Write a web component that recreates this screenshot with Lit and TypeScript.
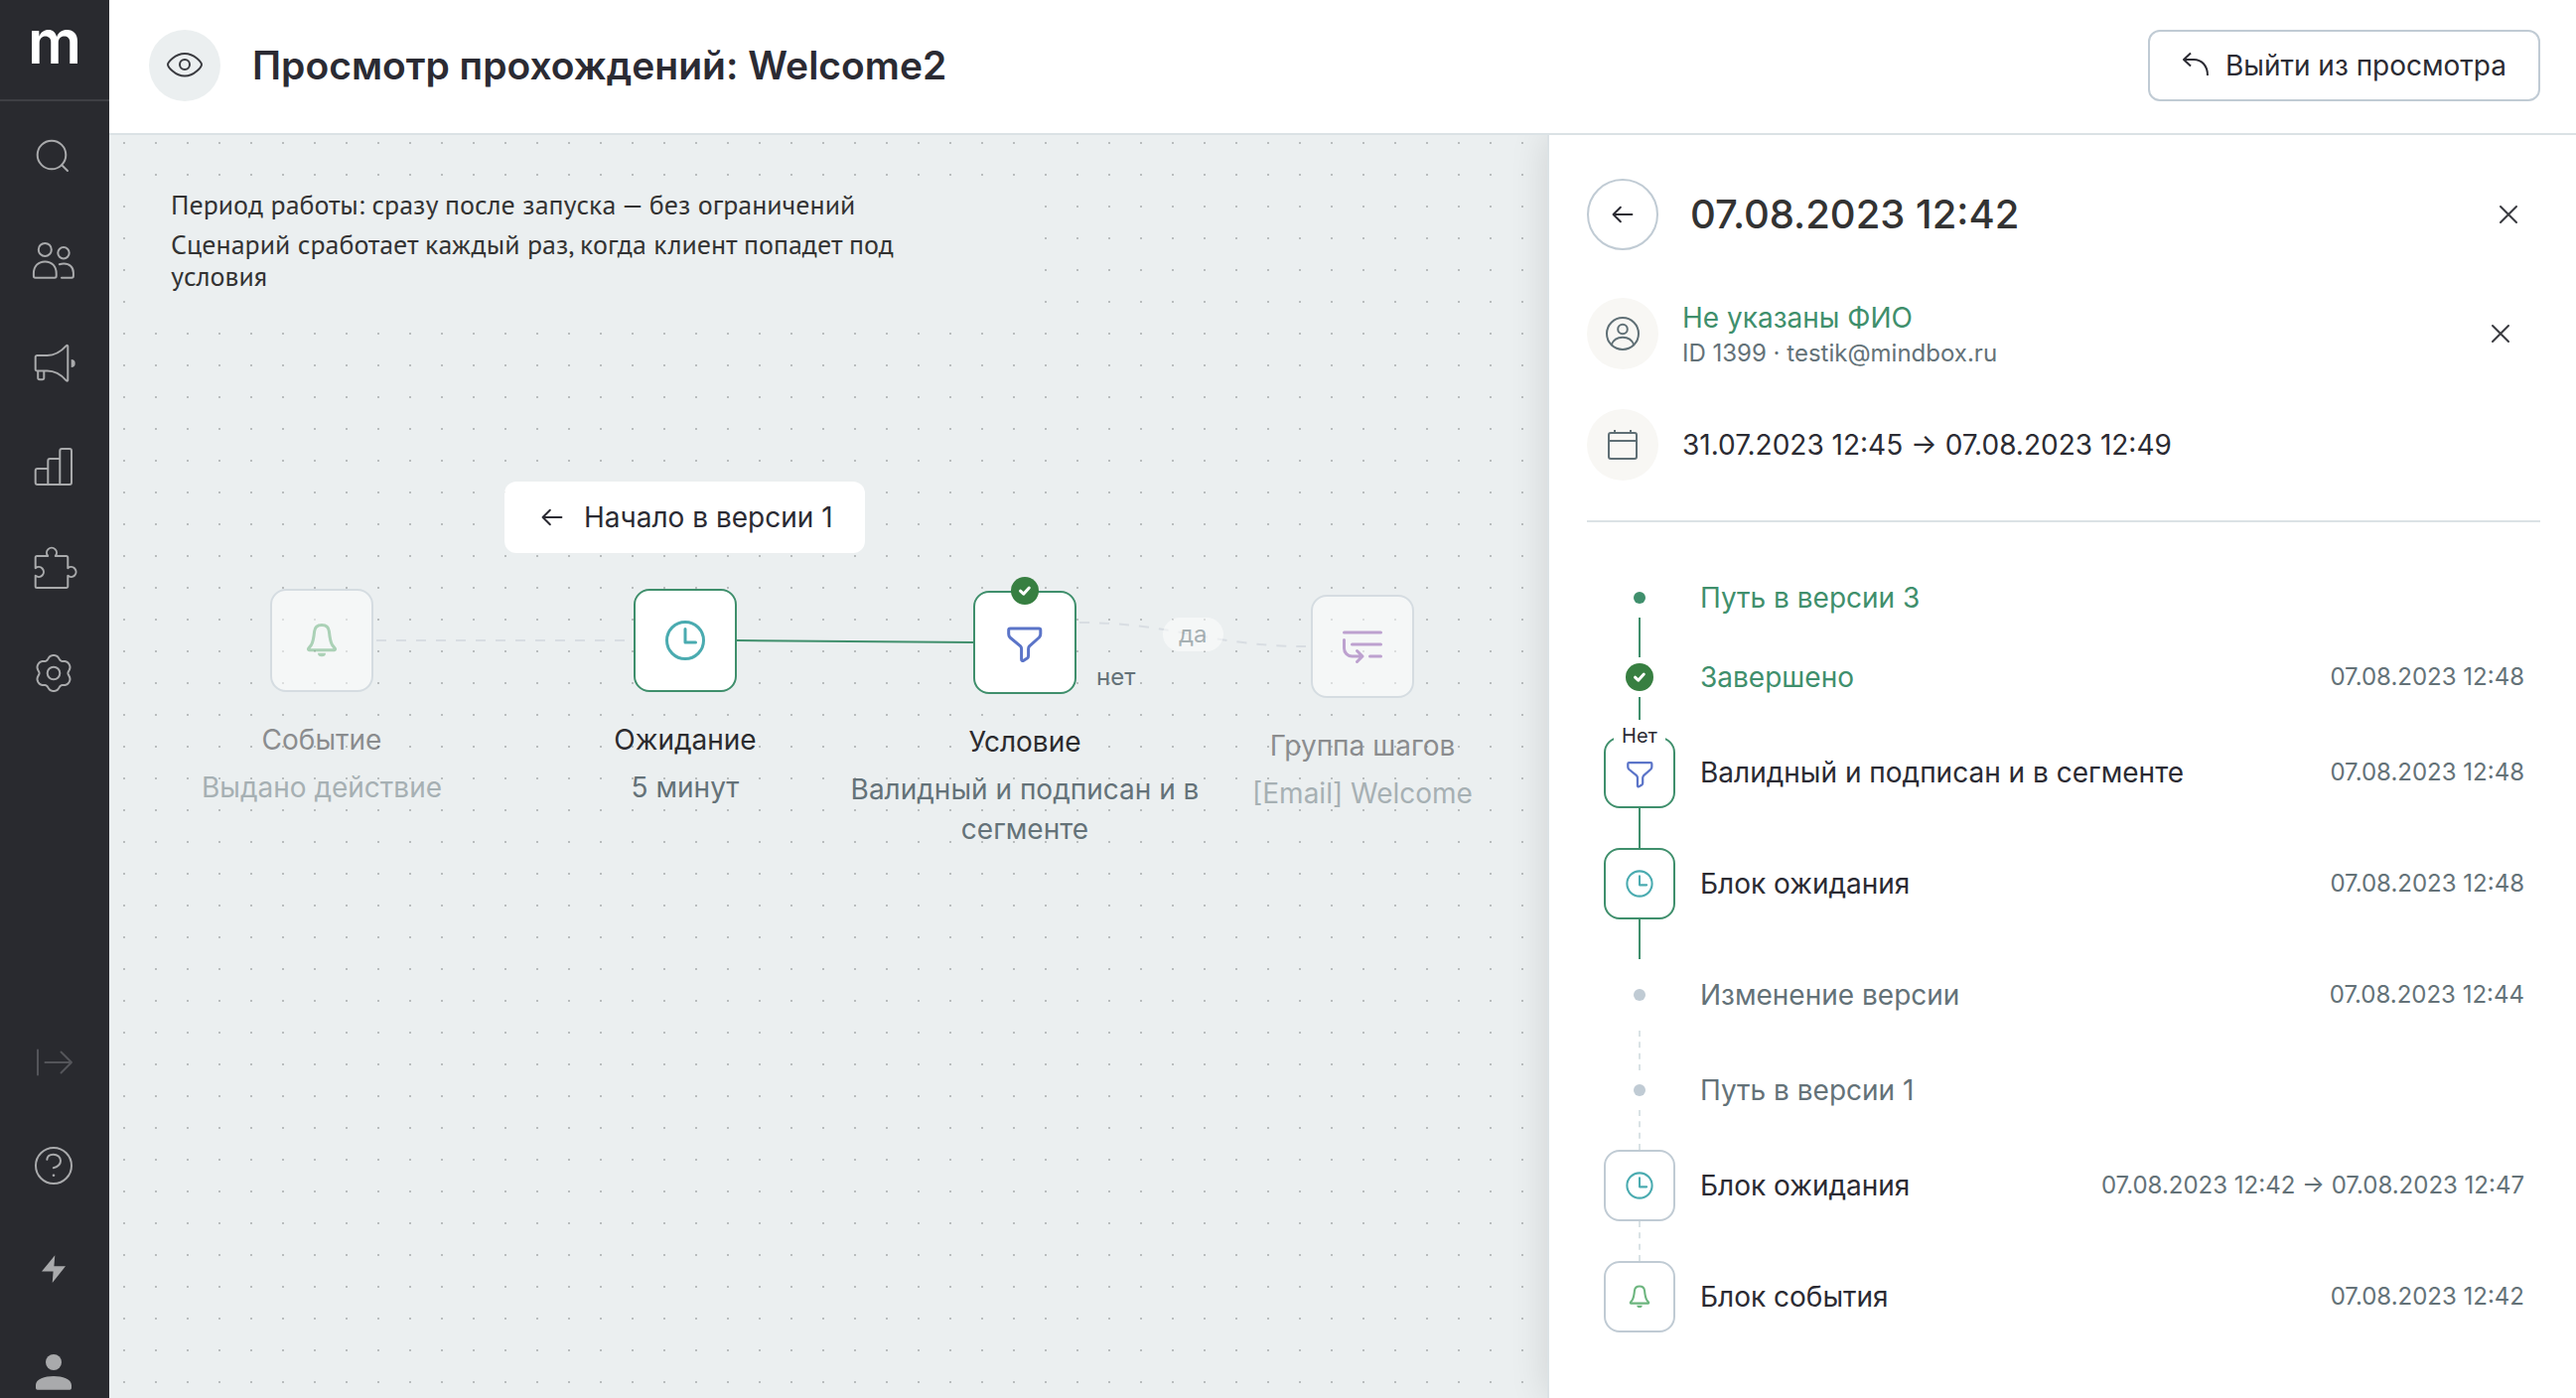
import { LitElement, html, svg, css, nothing } from "lit";
import type { SVGTemplateResult, TemplateResult } from "lit";
import { customElement } from "lit/decorators.js";
import { classMap } from "lit/directives/class-map.js";
import { styleMap } from "lit/directives/style-map.js";

/* ---------- icons ---------- */

const icon = (size: number, box: number, body: SVGTemplateResult, stroke = 2): TemplateResult => html`
  <svg width=${size} height=${size} viewBox="0 0 ${box} ${box}" fill="none" stroke="currentColor"
    stroke-width=${stroke} stroke-linecap="round" stroke-linejoin="round" aria-hidden="true">${body}</svg>`;

/* Six soft lobes around the centre of a 52-unit box. */
const gearOutline = (): string => {
  const points: string[] = [];
  for (let deg = 0; deg < 360; deg += 4) {
    const a = (deg * Math.PI) / 180;
    const r = 16.5 + 1.8 * Math.cos(6 * a) - 0.3 * Math.cos(12 * a);
    points.push(`${(25 + r * Math.sin(a)).toFixed(2)} ${(26 - r * Math.cos(a)).toFixed(2)}`);
  }
  return `M${points.join("L")}Z`;
};

const nav = {
  search: svg`<circle cx="23" cy="24" r="14.3"/><path d="M33.2 34.2L39 40"/>`,
  people: svg`<circle cx="16.3" cy="15.4" r="6.5"/><path d="M4.9 39.5C4.9 32 9.5 27.4 16.3 27.4S27.7 32 27.7 39.5V42a1.7 1.7 0 0 1-1.7 1.7H6.6A1.7 1.7 0 0 1 4.9 42Z"/><circle cx="35" cy="18.8" r="5.7"/><path d="M30.8 30.2C32.3 29.7 33.8 29.4 35.3 29.4C41 29.4 44.9 33.2 44.9 38.8V42a1.7 1.7 0 0 1-1.7 1.7H33"/>`,
  megaphone: svg`<path d="M8.4 18H18.5C26 18 33.5 13 37.8 8.2C38.6 7.5 39.3 7.8 39.3 8.8V42.7C39.3 43.7 38.6 44 37.8 43.3C33.5 38.5 26 33.6 18.5 33.6H8.4A1.7 1.7 0 0 1 6.7 31.9V19.7A1.7 1.7 0 0 1 8.4 18Z"/><path d="M9.2 34V40.5A1.8 1.8 0 0 0 11 42.3H13.5A1.8 1.8 0 0 0 15.3 40.5V34"/><path d="M42.7 22A4 4 0 0 1 42.7 30Z" fill="currentColor" stroke="none"/>`,
  chart: svg`<path d="M19.3 44H8.7a2 2 0 0 1-2-2V30a2 2 0 0 1 2-2H19.3M31.3 44H19.3V20a2 2 0 0 1 2-2H31.3M31.3 44V10a2 2 0 0 1 2-2H41a2 2 0 0 1 2 2V42a2 2 0 0 1-2 2Z"/>`,
  puzzle: svg`<path d="M8.2 12H19.2A5 5 0 1 1 26.8 12H37.8A1.5 1.5 0 0 1 39.3 13.5V24.2A5 5 0 1 1 39.3 31.8V42.5A1.5 1.5 0 0 1 37.8 44H8.2A1.5 1.5 0 0 1 6.7 42.5V31.8A5 5 0 1 0 6.7 24.2V13.5A1.5 1.5 0 0 1 8.2 12Z"/>`,
  gear: svg`<path d=${gearOutline()}/><circle cx="25" cy="26" r="6.3"/>`,
  expand: svg`<path d="M9 13.5V38.5M16.5 26H43M32.5 15.5L43 26L32.5 36.5"/>`,
  help: svg`<circle cx="25" cy="26" r="18"/><path d="M18.3 19.8C18.6 16.6 21.3 14.7 24.7 14.7C28.9 14.7 32 17.4 32 21C32 25.2 28.3 27.3 24.8 28.3"/><circle cx="25" cy="35.8" r="1.3" fill="currentColor" stroke="none"/>`,
  bolt: svg`<path d="M26.3 12.3L13 28.6H24.6L23.7 40L37 23.3H25.4Z" fill="currentColor" stroke="none"/>`,
  person: svg`<g fill="currentColor" stroke="none"><circle cx="25" cy="16" r="8"/><path d="M7 39C7 33 16 30 25 30S43 33 43 39V42A1.7 1.7 0 0 1 41.3 43.7H8.7A1.7 1.7 0 0 1 7 42Z"/></g>`,
};

const ui = {
  eye: svg`<path d="M2 18C2 16 9 7 19 7S36 16 36 18S29 29.5 19 29.5S2 20 2 18Z"/><circle cx="19" cy="18" r="5"/>`,
  back: svg`<path d="M3 14H25M11.5 5.5L3 14L11.5 22.5"/>`,
  undo: svg`<path d="M9 1.5L2 8L9 14.5M2 8H12C20 8 26 14 26 24" stroke-linecap="butt"/>`,
  close: svg`<path d="M2 2L18 18M18 2L2 18"/>`,
  user: svg`<circle cx="18" cy="18" r="16"/><circle cx="18" cy="13.5" r="4.8"/><path d="M6.8 29.2C8.5 24.5 12.8 21.8 18 21.8S27.5 24.5 29.2 29.2"/>`,
  calendar: svg`<rect x="4" y="6" width="28" height="26" rx="2"/><path d="M4 14H32M10 3V6M26 3V6" stroke-linecap="butt"/>`,
  tick: svg`<path d="M9.5 14.2L12.7 17.2L18.3 11"/>`,
};

const steps = {
  bell: svg`<path d="M22 6.5C17.5 6.5 15 9 14.6 13C14 19 13.5 23 11.5 26.5L8.6 30.2C8.2 31 8.5 31.7 9.3 31.7H34.7C35.5 31.7 35.8 31 35.4 30.2L32.5 26.5C30.5 23 30 19 29.4 13C29 9 26.5 6.5 22 6.5Z"/><path d="M18 34.8H26A4 3.5 0 0 1 18 34.8Z" fill="currentColor" stroke="none"/>`,
  clock: svg`<circle cx="22" cy="22" r="18.5"/><path d="M22 10.5V24H32.5"/>`,
  filter: svg`<path d="M7.3 8H36.2A1.6 1.6 0 0 1 37.8 9.6V13.5C37.8 15 37.3 16 36.4 17L26.8 25.6C26 26.5 25.6 27.3 25.6 28.5V35.5C25.6 36.7 25.2 37.4 24.3 38L20.8 40.2C19.6 41 18.6 40.5 18.6 39V28.5C18.6 27.3 18.2 26.4 17.4 25.6L7 17C6.1 16 5.7 15 5.7 13.5V9.6A1.6 1.6 0 0 1 7.3 8Z"/>`,
  group: svg`<path d="M3.5 8H40.5M11.5 20H40.5M29.5 32H40.5M3.5 15.5V24A8 8 0 0 0 11.5 32H22M16.5 26.5L22 32L16.5 37.5"/>`,
};

type StepKind = keyof typeof steps;

/* ---------- data ---------- */

interface FlowNode { kind: StepKind; title: string; note: string; x: number; y: number; dim?: boolean; done?: boolean }

const nodes: FlowNode[] = [
  { kind: "bell", title: "Событие", note: "Выдано действие", x: 214, y: 457, dim: true },
  { kind: "clock", title: "Ожидание", note: "5 минут", x: 580, y: 457 },
  { kind: "filter", title: "Условие", note: "Валидный и подписан и в сегменте", x: 922, y: 459, done: true },
  { kind: "group", title: "Группа шагов", note: "[Email] Welcome", x: 1262, y: 463, dim: true },
];

interface HistoryItem {
  mark: "dot" | "check" | StepKind;
  text: string;
  time?: string;
  tone?: "green" | "grey";
  active?: boolean;
  tall?: boolean;
  tag?: string;
  link?: "solid" | "dashed";
}

const history: HistoryItem[] = [
  { mark: "dot", text: "Путь в версии 3", tone: "green", active: true, link: "solid" },
  { mark: "check", text: "Завершено", time: "07.08.2023 12:48", tone: "green", active: true, link: "solid" },
  { mark: "filter", text: "Валидный и подписан и в сегменте", time: "07.08.2023 12:48", active: true, tall: true, tag: "Нет", link: "solid" },
  { mark: "clock", text: "Блок ожидания", time: "07.08.2023 12:48", active: true, tall: true, link: "solid" },
  { mark: "dot", text: "Изменение версии", time: "07.08.2023 12:44", tone: "grey", tall: true, link: "dashed" },
  { mark: "dot", text: "Путь в версии 1", tone: "grey", link: "dashed" },
  { mark: "clock", text: "Блок ожидания", time: "07.08.2023 12:42 → 07.08.2023 12:47", tall: true, link: "dashed" },
  { mark: "bell", text: "Блок события", time: "07.08.2023 12:42", tall: true },
];

const base = css`
  :host { display: block; box-sizing: border-box; font-family: Inter, "Liberation Sans", sans-serif; }
  *, *::before, *::after { box-sizing: border-box; }
  svg { display: block; flex: none; overflow: visible; }
  button { font: inherit; color: inherit; background: none; border: 0; padding: 0; margin: 0; cursor: pointer; }
  h1, h2, p, ol { margin: 0; padding: 0; font-weight: inherit; list-style: none; }
  .k-bell { color: #6cb57e; }
  .k-clock { color: #4aabb0; }
  .k-filter { color: #5b74c8; }
  .k-group { color: #9155b0; }
  .badge { display: block; width: 28px; height: 28px; border-radius: 50%; background: #377f41; color: #fff; }
`;

/* ---------- sidebar ---------- */

@customElement("side-nav")
export class SideNav extends LitElement {
  static styles = [base, css`
    :host { background: #292a2f; color: #a9aaac; overflow: hidden; display: flex; flex-direction: column; align-items: stretch; }
    .logo { height: 102px; border-bottom: 2px solid #3e3f44; color: #fff; text-align: center; font-size: 60px; line-height: 84px; font-weight: 600; font-optical-sizing: none; text-decoration: none; flex: none; }
    .items { display: flex; flex-direction: column; align-items: center; gap: 52px; padding-top: 30px; }
    .bottom { margin-top: auto; }
    .item { width: 52px; height: 52px; }
    .faded { color: #54555a; }
  `];

  private item(label: string, body: SVGTemplateResult, faded = false) {
    return html`<button class=${classMap({ item: true, faded })} aria-label=${label}>${icon(52, 52, body)}</button>`;
  }

  render() {
    return html`
      <a class="logo" href="#" aria-label="Mindbox">m</a>
      <div class="items">
        ${this.item("Поиск", nav.search)}
        ${this.item("Клиенты", nav.people)}
        ${this.item("Кампании", nav.megaphone)}
        ${this.item("Отчеты", nav.chart)}
        ${this.item("Интеграции", nav.puzzle)}
        ${this.item("Настройки", nav.gear)}
      </div>
      <div class="items bottom">
        ${this.item("Развернуть", nav.expand, true)}
        ${this.item("Помощь", nav.help)}
        ${this.item("Новости", nav.bolt)}
        ${this.item("Профиль", nav.person)}
      </div>`;
  }
}

/* ---------- scenario canvas ---------- */

@customElement("flow-canvas")
export class FlowCanvas extends LitElement {
  static styles = [base, css`
    :host {
      position: relative; overflow: hidden; min-width: 0; background-color: #ebeff0;
      background-image: radial-gradient(circle at 1px 1px, #b9bdbe 1px, transparent 1px);
      background-size: 32px 32px; background-position: 14px 7px; padding: 46px 42px;
    }
    .about {
      width: 880px; max-width: 100%; padding: 8px 100px 16px 20px; background: #ebeff0; color: #333;
      font-family: "PT Sans", "Noto Sans", sans-serif; font-size: 28px; line-height: 32px;
      display: flex; flex-direction: column; gap: 8px;
    }
    .edges { position: absolute; left: 0; top: 0; width: 100%; height: 100%; fill: none; stroke-width: 2; }
    .idle { stroke: #d8dde2; stroke-dasharray: 10 10; }
    .passed { stroke: #3f8f6c; }
    .node { position: absolute; width: 366px; transform: translateX(-50%); display: flex; flex-direction: column; align-items: center; font-size: 28px; line-height: 40px; }
    .dim { opacity: 0.5; }
    .box { position: relative; width: 104px; height: 104px; border: 2px solid #3f8f6c; border-radius: 16px; background: #fff; display: grid; place-items: center; }
    .dim .box { border-color: #c0cbd4; }
    .box .badge { position: absolute; top: -16px; left: 36px; }
    .title { margin-top: 28px; color: #2b2b2e; }
    .note { margin-top: 8px; color: #647278; }
    .start { position: absolute; left: 398px; top: 349px; height: 72px; padding: 0 32px 0 36px; border-radius: 12px; background: #fff; color: #2b2b33; font-size: 28px; display: flex; align-items: center; gap: 20px; }
    .label { position: absolute; height: 34px; line-height: 34px; font-size: 24px; color: #647278; }
    .yes { left: 1061px; top: 486px; padding: 0 16px; border-radius: 17px; background: #fff; opacity: 0.5; }
    .no { left: 994px; top: 529px; }
  `];

  render() {
    return html`
      <div class="about">
        <p>Период работы: сразу после запуска — без ограничений</p>
        <p>Сценарий сработает каждый раз, когда клиент попадет под условия</p>
      </div>
      <svg class="edges" aria-hidden="true">
        <path class="idle" d="M269 509H522"/>
        <path class="passed" d="M632 509L870 511"/>
        <path class="idle" d="M977 491C1070 491 1110 515 1205 515"/>
      </svg>
      <button class="start">${icon(24, 28, ui.back, 2.3)}Начало в версии 1</button>
      ${nodes.map((n) => html`
        <button class=${classMap({ node: true, dim: !!n.dim })} style=${styleMap({ left: `${n.x}px`, top: `${n.y}px` })}>
          <span class="box k-${n.kind}">
            ${icon(44, 44, steps[n.kind], 3)}
            ${n.done ? html`<span class="badge">${icon(28, 28, ui.tick, 3)}</span>` : nothing}
          </span>
          <span class="title">${n.title}</span>
          <span class="note">${n.note}</span>
        </button>`)}
      <span class="label yes">да</span>
      <span class="label no">нет</span>`;
  }
}

/* ---------- details panel ---------- */

@customElement("run-panel")
export class RunPanel extends LitElement {
  static styles = [base, css`
    :host { position: relative; z-index: 1; background: #fff; border-left: 2px solid #dbe2e5; box-shadow: 0 0 36px rgba(0, 0, 0, 0.12); padding: 44px 36px 40px 38px; color: #2b2b33; font-size: 28px; line-height: 40px; }
    .row { display: flex; align-items: center; height: 72px; gap: 24px; }
    .row + .row { margin-top: 40px; }
    .head { gap: 32px; }
    .head + .row { margin-top: 48px; }
    h2 { font-size: 40px; font-weight: 500; color: #333; }
    .round { width: 72px; height: 72px; border-radius: 50%; display: grid; place-items: center; flex: none; }
    .back { border: 2px solid #c0cbd4; }
    .soft { background: #f8f7f4; color: #5f6f75; }
    .close { margin-left: auto; width: 64px; height: 64px; display: grid; place-items: center; color: #3a3b40; }
    .near { margin-right: 8px; }
    .name { display: block; color: #3f8f6c; text-decoration: none; }
    .id { font-size: 24px; line-height: 32px; color: #647278; }
    .history { margin-top: 40px; border-top: 2px solid #dbe2e5; padding: 56px 16px 0 17px; }
    .entry { display: grid; grid-template-columns: 72px minmax(0, 1fr) auto; column-gap: 25px; align-items: center; }
    .tall { min-height: 72px; }
    .mark { position: relative; display: grid; place-items: center; }
    .dot { width: 12px; height: 12px; border-radius: 50%; background: #c0cbd4; }
    .active .dot { background: #3f8f6c; }
    .box { width: 72px; height: 72px; border: 2px solid #c0cbd4; border-radius: 16px; display: grid; place-items: center; }
    .active .box { border-color: #3f8f6c; }
    .tag { position: absolute; top: -17px; left: 10px; width: 52px; height: 28px; background: #fff; color: #2b2b33; font-size: 20px; line-height: 32px; text-align: center; }
    .green { color: #3f8f6c; }
    .grey, time { color: #647278; }
    time { font-size: 24px; }
    .link { height: 40px; margin-left: 35px; border-left: 2px solid #3f8f6c; }
    .dashed { border-left: 2px dashed #d9e2e5; }
  `];

  private mark(h: HistoryItem) {
    if (h.mark === "dot") return html`<span class="dot"></span>`;
    if (h.mark === "check") return html`<span class="badge">${icon(28, 28, ui.tick, 3)}</span>`;
    const size = h.mark === "filter" ? 33 : 30;
    return html`<span class="box k-${h.mark}">${icon(size, 44, steps[h.mark], 3)}</span>
      ${h.tag ? html`<span class="tag">${h.tag}</span>` : nothing}`;
  }

  render() {
    return html`
      <div class="row head">
        <button class="round back" aria-label="Назад">${icon(24, 28, ui.back, 2.3)}</button>
        <h2>07.08.2023 12:42</h2>
        <button class="close" aria-label="Закрыть">${icon(20, 20, ui.close)}</button>
      </div>
      <div class="row">
        <span class="round soft">${icon(36, 36, ui.user)}</span>
        <div>
          <a class="name" href="#">Не указаны ФИО</a>
          <p class="id">ID 1399 · testik@mindbox.ru</p>
        </div>
        <button class="close near" aria-label="Сбросить клиента">${icon(20, 20, ui.close)}</button>
      </div>
      <div class="row">
        <span class="round soft">${icon(36, 36, ui.calendar)}</span>
        <p>31.07.2023 12:45 → 07.08.2023 12:49</p>
      </div>
      <ol class="history">
        ${history.map((h) => html`
          <li>
            <div class=${classMap({ entry: true, tall: !!h.tall, active: !!h.active })}>
              <span class="mark">${this.mark(h)}</span>
              <span class=${h.tone ?? ""}>${h.text}</span>
              ${h.time ? html`<time>${h.time}</time>` : nothing}
            </div>
            ${h.link ? html`<div class="link ${h.link}"></div>` : nothing}
          </li>`)}
      </ol>`;
  }
}

/* ---------- page ---------- */

@customElement("app-root")
export class AppRoot extends LitElement {
  static styles = [base, css`
    :host { display: grid; grid-template-columns: 110px minmax(0, 1fr); height: 100vh; overflow: hidden; background: #fff; }
    .page { display: flex; flex-direction: column; min-width: 0; min-height: 0; }
    header { display: flex; align-items: center; gap: 32px; flex: none; padding: 30px 36px 32px 40px; border-bottom: 2px solid #dbe2e5; }
    .view { width: 72px; height: 72px; border-radius: 50%; background: #ebeff0; color: #3a3b40; display: grid; place-items: center; flex: none; }
    h1 { font-size: 39px; line-height: 48px; font-weight: 600; color: #2b2b33; }
    .exit { margin-left: auto; height: 72px; padding: 0 32px; border: 2px solid #c0cbd4; border-radius: 12px; display: flex; align-items: center; gap: 16px; font-size: 28px; color: #2b2b33; white-space: nowrap; }
    .work { flex: 1; min-height: 0; display: grid; grid-template-columns: minmax(0, 1fr) minmax(720px, 1036px); overflow: hidden; }
  `];

  render() {
    return html`
      <side-nav></side-nav>
      <div class="page">
        <header>
          <span class="view">${icon(38, 38, ui.eye)}</span>
          <h1>Просмотр прохождений: Welcome2</h1>
          <button class="exit">${icon(28, 28, ui.undo)}Выйти из просмотра</button>
        </header>
        <main class="work">
          <flow-canvas></flow-canvas>
          <run-panel></run-panel>
        </main>
      </div>`;
  }
}
